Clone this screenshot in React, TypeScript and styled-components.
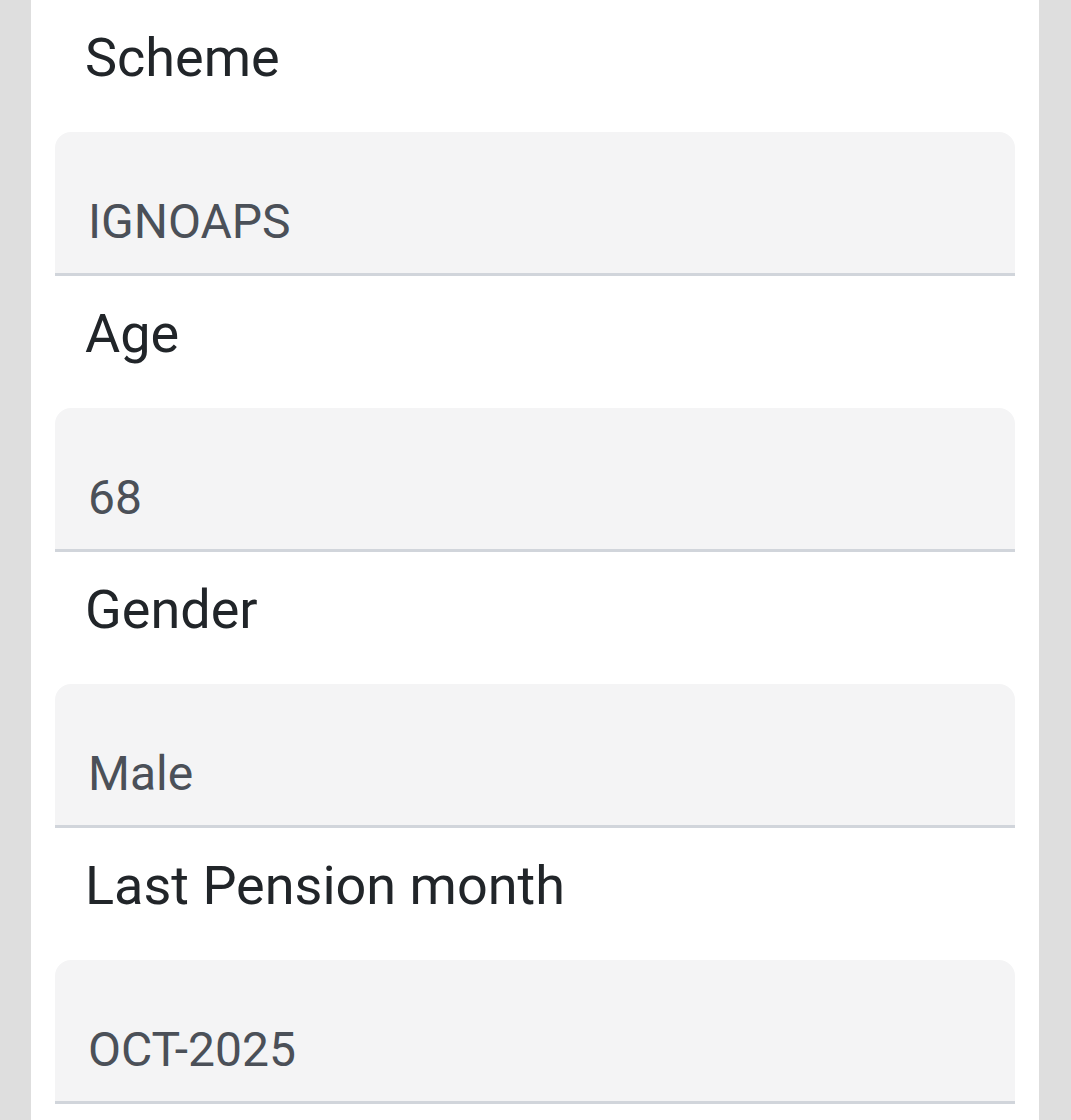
import React from 'react'
import styled, { createGlobalStyle } from 'styled-components'

const GlobalStyle = createGlobalStyle`
  html, body {
    margin: 0;
    padding: 0;
    background: #dedede;
  }

  body {
    font-family: Roboto, "Noto Sans", "Liberation Sans", sans-serif;
  }
`

const Page = styled.div`
  min-height: 1120px;
  padding: 0 32px 0 31px;
  background: #dedede;
`

const Card = styled.div`
  min-height: 1120px;
  background: #ffffff;
  padding: 0 24px;
`

const Field = styled.div`
  display: flex;
  flex-direction: column;
`

const Label = styled.label`
  display: block;
  padding: 17px 0 34px 30px;
  font-size: 54px;
  line-height: 81px;
  color: #212529;
`

const Input = styled.input`
  display: block;
  box-sizing: border-box;
  width: 100%;
  height: 144px;
  margin: 0;
  padding: 65px 33px 28px;
  border: none;
  border-bottom: 3px solid #d1d5db;
  border-radius: 16px 16px 0 0;
  background: #f4f4f5;
  font-family: Roboto, "Noto Sans", "Liberation Sans", sans-serif;
  font-size: 48px;
  line-height: 48px;
  color: #4b5058;
  outline: none;
`

const fields = [
  { id: 'scheme', label: 'Scheme', value: 'IGNOAPS' },
  { id: 'age', label: 'Age', value: '68' },
  { id: 'gender', label: 'Gender', value: 'Male' },
  { id: 'last-pension', label: 'Last Pension month', value: 'OCT-2025' },
]

export default function App() {
  return (
    <>
      <GlobalStyle />
      <Page>
        <Card>
          {fields.map((field) => (
            <Field key={field.id}>
              <Label htmlFor={field.id}>{field.label}</Label>
              <Input id={field.id} value={field.value} readOnly />
            </Field>
          ))}
        </Card>
      </Page>
    </>
  )
}
